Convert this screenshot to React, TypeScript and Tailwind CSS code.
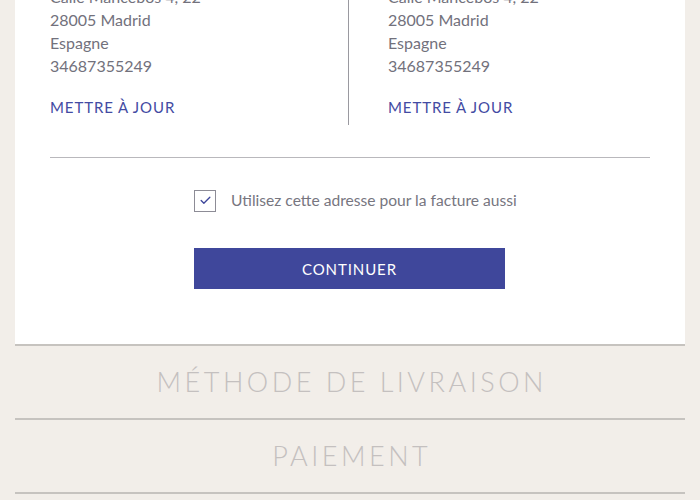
import { Check } from 'lucide-react'

const address = ['Calle Mancebos 4, 22', '28005 Madrid', 'Espagne', '34687355249']

function AddressBlock({ className }: { className: string }) {
  return (
    <div className={className}>
      {address.map((line) => (
        <p key={line} className="text-[16px] leading-[23px] text-[#72717c]">
          {line}
        </p>
      ))}
      <button className="mt-[19px] text-[15px] leading-[23px] tracking-[0.9px] text-[#434ba3]">
        METTRE À JOUR
      </button>
    </div>
  )
}

const steps = ['MÉTHODE DE LIVRAISON', 'PAIEMENT']

export default function App() {
  return (
    <div className="min-h-[500px] bg-[#f2eee9] px-[15px] font-['Lato',sans-serif] overflow-hidden">
      <div className="bg-white px-[35px] pb-[55px] border-b-2 border-[#c6c3bf] -mt-[15px]">
        <div className="grid grid-cols-2">
          <AddressBlock className="border-r border-[#9a99a0] pb-[6px] w-[299px]" />
          <AddressBlock className="pl-[38px] pb-[6px]" />
        </div>
        <div className="mt-[32px] border-t border-[#b9b8bc]" />
        <label className="mt-[31px] ml-[144px] flex items-center gap-[15px]">
          <span className="flex h-[22px] w-[22px] items-center justify-center border border-[#8d8c96]">
            <Check className="h-[13px] w-[13px] text-[#3f479b]" strokeWidth={2.5} />
          </span>
          <span className="text-[15.6px] text-[#77767f]">Utilisez cette adresse pour la facture aussi</span>
        </label>
        <button className="mt-[36px] ml-[144px] flex h-[41px] w-[311px] items-center justify-center bg-[#3f479b] text-[15px] tracking-[0.9px] text-white">
          CONTINUER
        </button>
      </div>
      {steps.map((step) => (
        <div
          key={step}
          className="flex h-[74px] items-center justify-center border-b-2 border-[#c6c3bf]"
        >
          <span className="pl-[3.5px] text-[27px] font-light tracking-[3.5px] text-[#c4c0bf]">
            {step}
          </span>
        </div>
      ))}
    </div>
  )
}
